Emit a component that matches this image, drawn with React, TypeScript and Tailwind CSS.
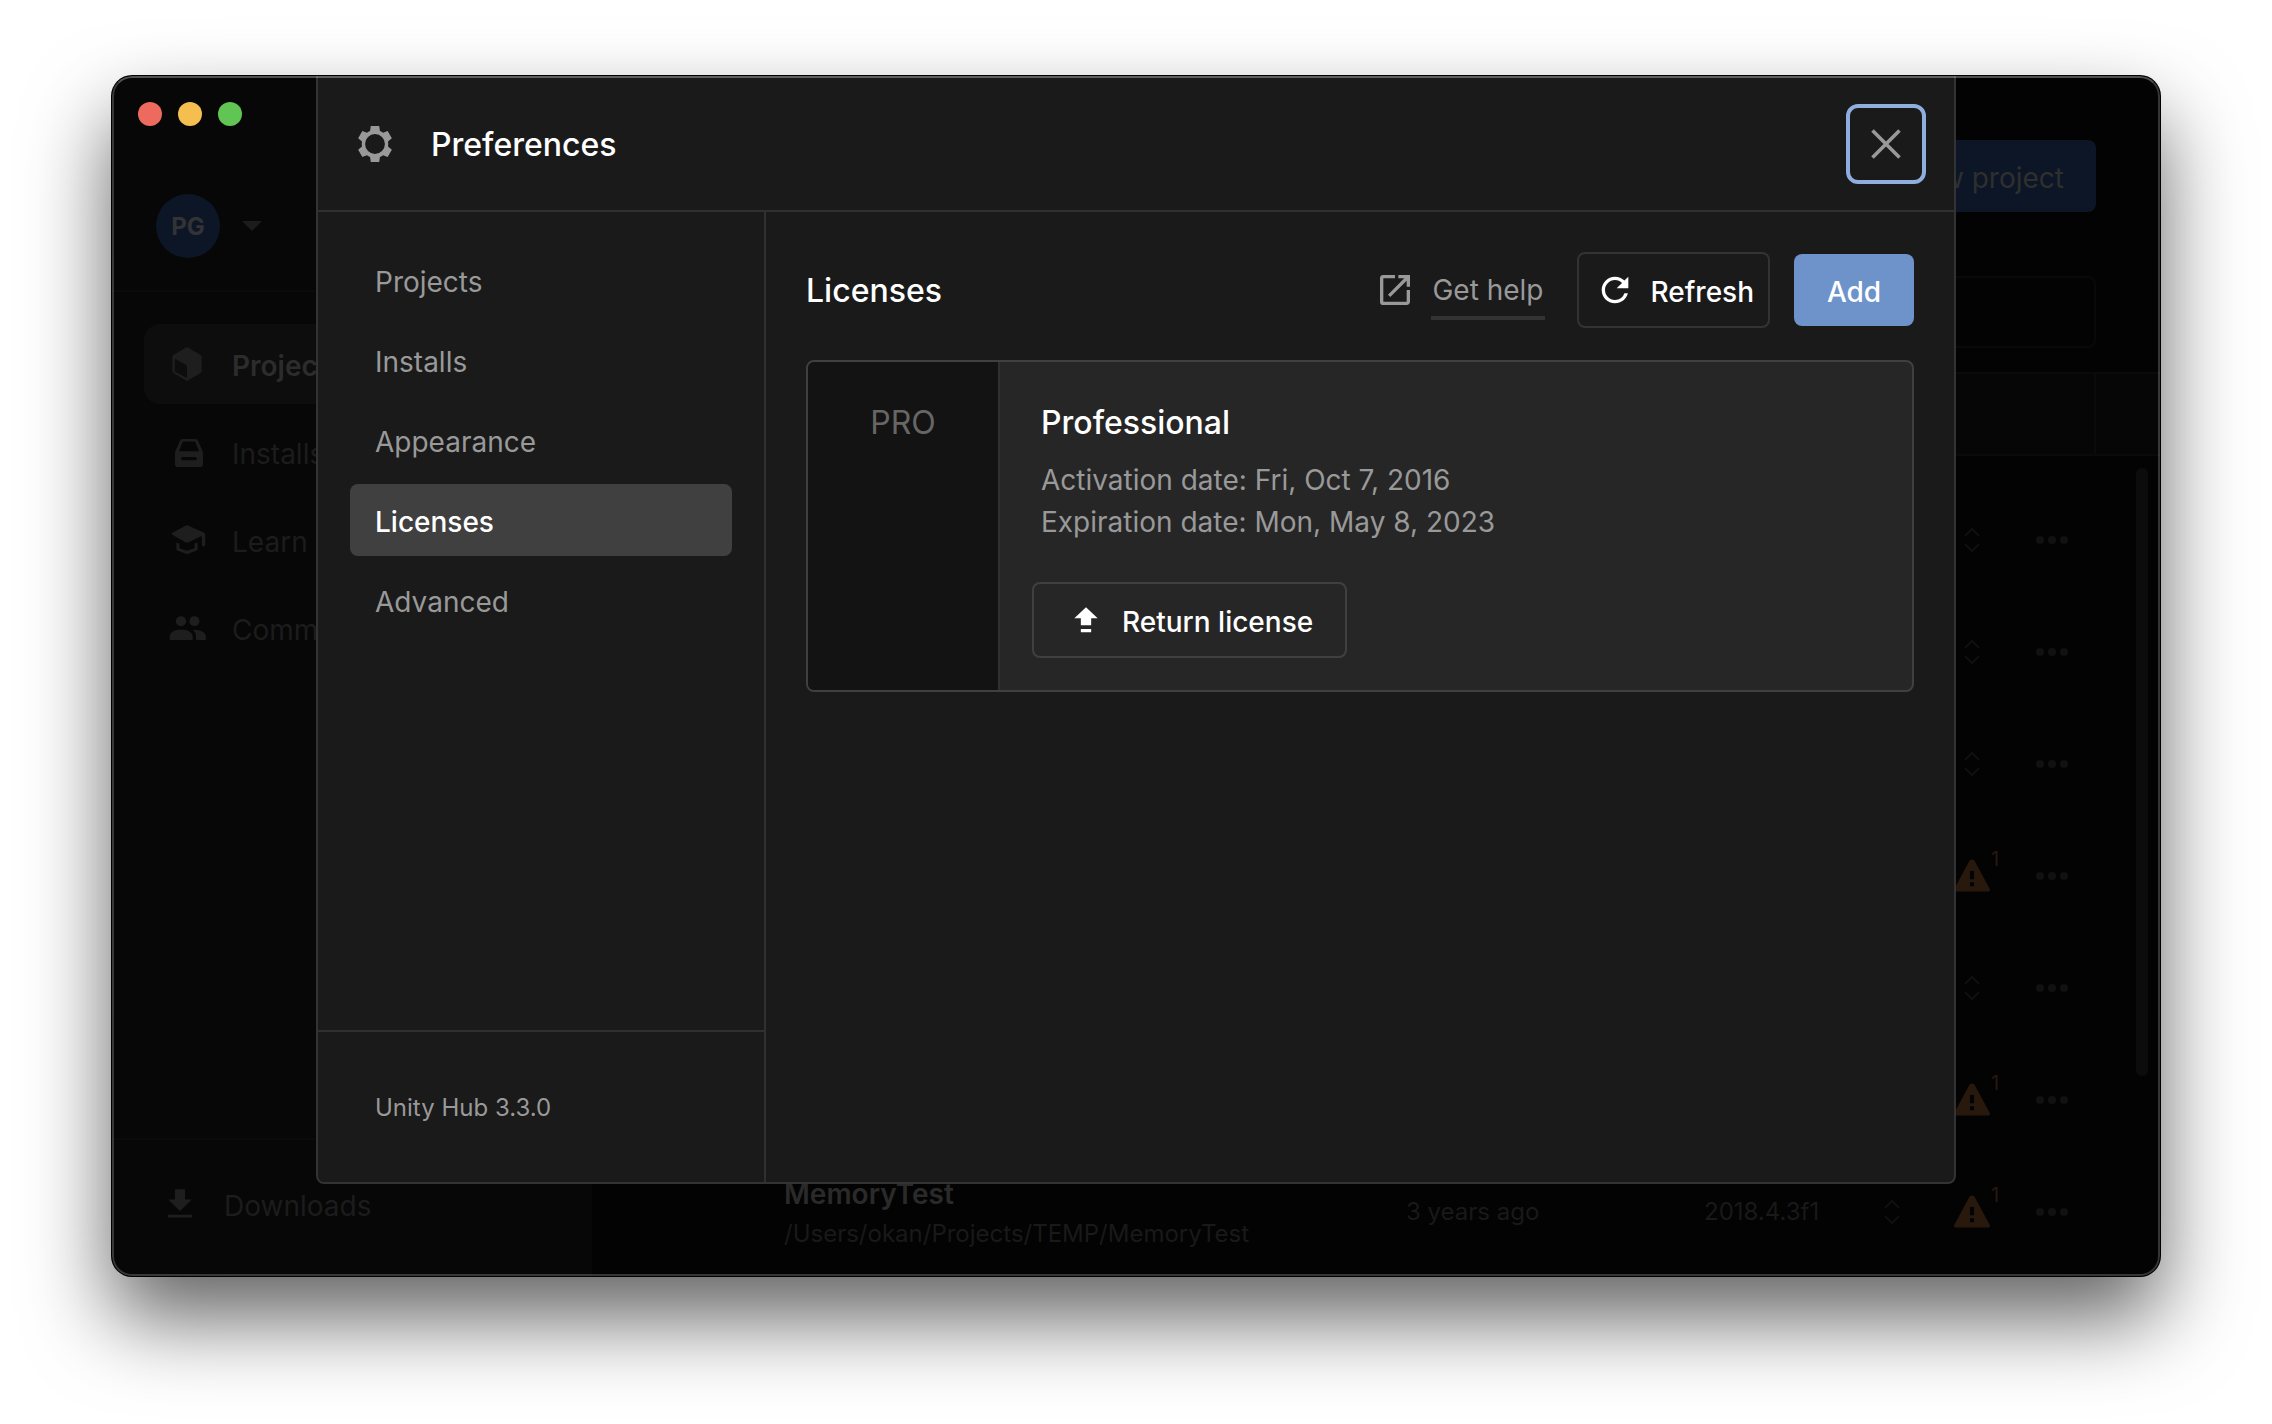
import type { ReactNode, SVGProps } from 'react';

type IconProps = SVGProps<SVGSVGElement>;

function Icon({ children, ...props }: IconProps & { children: ReactNode }) {
  return (
    <svg viewBox="0 0 24 24" fill="currentColor" aria-hidden="true" {...props}>
      {children}
    </svg>
  );
}

const GearIcon = (p: IconProps) => (
  <Icon {...p}>
    <path
      fillRule="evenodd"
      d="M9.700 2.200h4.600l.4 2.700c.6.2 1.200.6 1.700 1l2.500-1 2.300 4-2.100 1.700a7 7 0 0 1 0 2.800l2.100 1.700-2.300 4-2.500-1c-.5.4-1.100.8-1.700 1l-.4 2.700H9.700l-.4-2.700c-.6-.2-1.200-.6-1.700-1l-2.500 1-2.300-4 2.100-1.700a7 7 0 0 1 0-2.800L2.800 8.900l2.300-4 2.500 1c.5-.4 1.100-.8 1.700-1zM12 6.600a5.400 5.400 0 1 0 0 10.800a5.400 5.400 0 0 0 0-10.800z"
    />
  </Icon>
);
const CloseIcon = (p: IconProps) => (
  <Icon {...p}>
    <path d="M3 3l18 18M21 3L3 21" stroke="currentColor" strokeWidth="2.400" fill="none" />
  </Icon>
);
const OpenIcon = (p: IconProps) => (
  <Icon {...p}>
    <path d="M19 19H5V5h7V3H5a2 2 0 0 0-2 2v14a2 2 0 0 0 2 2h14c1.100 0 2-.9 2-2v-7h-2v7zM14 3v2h3.590l-9.830 9.830 1.410 1.410L19 6.410V10h2V3h-7z" />
  </Icon>
);
const RefreshIcon = (p: IconProps) => (
  <Icon {...p}>
    <path d="M17.650 6.350A7.958 7.958 0 0 0 12 4c-4.420 0-7.990 3.580-7.990 8s3.570 8 7.990 8c3.730 0 6.840-2.550 7.730-6h-2.080A5.990 5.990 0 0 1 12 18c-3.310 0-6-2.690-6-6s2.690-6 6-6c1.660 0 3.140.690 4.220 1.780L13 11h7V4l-2.350 2.350z" />
  </Icon>
);
const ReturnIcon = (p: IconProps) => (
  <Icon {...p}>
    <path d="M12 4.400L19 11h-3.900v4.200H8.900V11H5zM8.900 17.400h6.200v2H8.900z" />
  </Icon>
);
const CubeIcon = (p: IconProps) => (
  <Icon {...p}>
    <path
      fillRule="evenodd"
      d="M11.400 1.600q.6-.3 1.200 0l8 4.700q.6.4.6 1.100v9.200q0 .7-.6 1.100l-8 4.700q-.6.300-1.200 0l-8-4.700q-.6-.4-.6-1.100V7.400q0-.7.6-1.100zM4.700 8.800q-.4 0-.4.500v6.900q0 .5.400.8l6.700 3.600q.6.2.6-.5v-6.400q0-.6-.5-1z"
    />
  </Icon>
);
const DriveIcon = (p: IconProps) => (
  <Icon {...p}>
    <path
      fillRule="evenodd"
      d="M9.300 3.800h7.900c.8 0 1.500.5 1.800 1.200l2.900 6.600.2.900v7a2 2 0 0 1-2 2H6.400a2 2 0 0 1-2-2v-7l.2-.9L7.500 5c.3-.7 1-1.200 1.800-1.200zM9.400 5.400L6.900 11.500h12.700l-2.500-6.100zM9.300 15.200a1 1 0 0 0 0 2h7.900a1 1 0 0 0 0-2z"
    />
  </Icon>
);
const LearnIcon = (p: IconProps) => (
  <Icon {...p}>
    <path d="M11.400 2.800q.6-.3 1.200 0l10.300 4.600q.6.3.6.9v6.700a1 1 0 0 1-2.100 0V9.500l-8.700 4q-.7.300-1.400 0L2.500 8.600q-.8-.5 0-1zM5.300 13.800q1-.3 1.900.6v2.800L12 18.800l4.800-1.600v-2.800q.9-.9 1.900-.6v4q0 .6-.6.9L12 21l-6.100-2.300q-.6-.3-.6-.9z" />
  </Icon>
);
const PeopleIcon = (p: IconProps) => (
  <Icon {...p}>
    <circle cx="8.200" cy="7.700" r="3.200" />
    <circle cx="16.700" cy="7.700" r="3.200" />
    <path d="M1.100 19.600v-2.200c0-2.600 3.200-4.400 7.200-4.400s7.300 1.800 7.300 4.400v2.200zM15.700 13.100c4.800-.3 8.200 1.700 8.200 4.300v2.200h-6.200v-2.200c0-1.700-.6-3.200-2-4.300z" />
  </Icon>
);
const DownloadIcon = (p: IconProps) => (
  <Icon {...p}>
    <path d="M8.200 1h7.600v7.600h5L12 17.200 3.200 8.600h5zM3 20h18v2.200H3z" />
  </Icon>
);
const UpDownIcon = (p: IconProps) => (
  <svg viewBox="0 0 16 26" fill="none" stroke="currentColor" strokeWidth="2" aria-hidden="true" {...p}>
    <path d="M1 9l7-7 7 7M1 17l7 7 7-7" />
  </svg>
);
const WarningIcon = (p: IconProps) => (
  <Icon {...p}>
    <path
      fillRule="evenodd"
      d="M10.300 2.600a2 2 0 0 1 3.400 0l9.500 17.600c.5.900-.1 1.600-1 1.600H1.800c-.9 0-1.500-.7-1-1.600zM10.700 8.800v5.200h2.600V8.800zM10.700 16v2.500h2.600V16z"
    />
  </Icon>
);
const DotsIcon = (p: IconProps) => (
  <svg viewBox="0 0 32 8" fill="currentColor" aria-hidden="true" {...p}>
    <circle cx="4" cy="4" r="4" />
    <circle cx="16" cy="4" r="4" />
    <circle cx="28" cy="4" r="4" />
  </svg>
);

const appNav = [
  { label: 'Projects', icon: CubeIcon, active: true },
  { label: 'Installs', icon: DriveIcon, active: false },
  { label: 'Learn', icon: LearnIcon, active: false },
  { label: 'Community', icon: PeopleIcon, active: false },
];

function AppSidebar() {
  return (
    <aside className="flex w-[480px] shrink-0 flex-col bg-[#070707] text-[#1c1c1c]">
      <div className="flex h-[76px] items-center gap-4 pl-[26px]">
        <span className="size-6 rounded-full bg-[#ed6a5e]" />
        <span className="size-6 rounded-full bg-[#f5bf4f]" />
        <span className="size-6 rounded-full bg-[#61c554]" />
      </div>
      <button className="flex h-[140px] items-center gap-[22px] border-b-2 border-[#0a0a0a] pt-[10px] pl-11">
        <span className="flex size-16 items-center justify-center rounded-full bg-[#0d1626] pt-[2px] text-[24px] font-bold text-[#333]">
          PG
        </span>
        <svg viewBox="0 0 20 10" className="w-5" fill="currentColor" aria-hidden="true">
          <path d="M0 0h20L10 10z" />
        </svg>
      </button>
      <nav className="flex grow flex-col gap-2 px-8 pt-8">
        {appNav.map(({ label, icon: NavIcon, active }) => (
          <a
            key={label}
            href="#"
            className={
              active
                ? 'flex h-20 items-center gap-[26px] rounded-2xl bg-[#0d0d0d] pl-6 text-[28px] font-semibold text-[#2c2c2c]'
                : 'flex h-20 items-center gap-[26px] rounded-2xl pl-6 text-[28px]'
            }
          >
            <NavIcon className="size-[38px] text-[#1e1e1e]" />
            <span className="pt-[3px]">{label}</span>
          </a>
        ))}
      </nav>
      <button className="flex h-[138px] items-center gap-7 border-t-2 border-[#0a0a0a] pb-2 pl-[52px] text-[28px]">
        <DownloadIcon className="size-8 text-[#1e1e1e]" />
        <span className="pt-[3px]">Downloads</span>
      </button>
    </aside>
  );
}

type Project = { id: number; warn: boolean; name?: string; path?: string; age?: string; version?: string };

const projects: Project[] = [
  { id: 1, warn: false },
  { id: 2, warn: false },
  { id: 3, warn: false },
  { id: 4, warn: true },
  { id: 5, warn: false },
  { id: 6, warn: true },
  {
    id: 7,
    warn: true,
    name: 'MemoryTest',
    path: '/Users/okan/Projects/TEMP/MemoryTest',
    age: '3 years ago',
    version: '2018.4.3f1',
  },
];

function ProjectRow({ name, path, age, version, warn }: Project) {
  return (
    <li className="flex h-28 items-center pl-48 text-[24px] text-[#191919]">
      <div className="min-w-0 grow pt-1">
        <div className="text-[28px] leading-8 font-semibold text-[#2a2a2a]">{name}</div>
        <div className="mt-2 leading-8">{path}</div>
      </div>
      <span className="w-[298px] shrink-0">{age}</span>
      <span className="w-[148px] shrink-0">{version}</span>
      <span className="flex w-20 shrink-0 justify-center text-[#101010]">
        {warn && <UpDownIcon className="h-[26px] w-4" />}
      </span>
      <span className="flex w-20 shrink-0 justify-center text-[#101010]">
        {warn ? (
          <span className="relative text-[#29190d]">
            <WarningIcon className="size-[38px]" />
            <sup className="absolute -top-2 left-full text-[20px] leading-5">1</sup>
          </span>
        ) : (
          <UpDownIcon className="h-[26px] w-4" />
        )}
      </span>
      <button aria-label="Project menu" className="mr-[92px] ml-6 shrink-0 text-[#111]">
        <DotsIcon className="w-8" />
      </button>
    </li>
  );
}

function ProjectsPage() {
  return (
    <main className="flex min-w-0 grow flex-col bg-[#030303]">
      <div className="flex justify-end pt-16 pr-16">
        <button className="h-[72px] rounded-lg bg-[#0d1626] px-8 pt-[3px] text-[28px] text-[#2f2f2f]">
          New project
        </button>
      </div>
      <div className="mt-16 flex justify-end pr-16">
        <input aria-label="Search" className="h-[72px] w-[480px] rounded-lg border-2 border-[#090909] bg-transparent" />
      </div>
      <div className="mt-6 flex h-[84px] shrink-0 border-y-2 border-[#0a0a0a] bg-[#060606]">
        <div className="grow border-r-2 border-[#0a0a0a]" />
        <div className="w-16" />
      </div>
      <div className="relative">
        <ul className="pt-7">
          {projects.map((p) => (
            <ProjectRow key={p.id} {...p} />
          ))}
        </ul>
        <div className="absolute top-3 right-3 h-[608px] w-3 rounded-full bg-[#0c0c0c]" />
      </div>
    </main>
  );
}

const sections = ['Projects', 'Installs', 'Appearance', 'Licenses', 'Advanced'];

function Preferences() {
  return (
    <section
      role="dialog"
      aria-label="Preferences"
      className="absolute inset-x-[204px] top-0 bottom-[92px] flex flex-col rounded-b-lg border-x-2 border-b-2 border-[#333] bg-[#1a1a1a] text-[28px] text-[#999]"
    >
      <header className="flex h-[136px] shrink-0 items-center border-b-2 border-[#303030] pt-[2px] pr-7 pl-[35px]">
        <GearIcon className="size-11" />
        <h1 className="ml-[34px] grow pt-[2px] text-[32px] font-medium text-white">Preferences</h1>
        <button
          aria-label="Close"
          className="flex size-20 items-center justify-center rounded-xl border-4 border-[#8fadde]"
        >
          <CloseIcon className="size-9" />
        </button>
      </header>
      <div className="flex min-h-0 grow">
        <div className="flex w-[448px] shrink-0 flex-col border-r-2 border-[#303030]">
          <nav className="flex grow flex-col gap-2 px-8 pt-8">
            {sections.map((s) => (
              <a
                key={s}
                href="#"
                className={
                  s === 'Licenses'
                    ? 'flex h-[72px] items-center rounded-lg bg-[#404040] px-[25px] pt-[3px] font-medium text-white'
                    : 'flex h-[72px] items-center rounded-lg px-[25px] pt-[3px]'
                }
              >
                {s}
              </a>
            ))}
          </nav>
          <footer className="flex h-[152px] items-center border-t-2 border-[#303030] pt-[2px] pl-[57px] text-[24px]">
            Unity Hub 3.3.0
          </footer>
        </div>
        <div className="grow px-10 pt-10">
          <div className="flex h-[76px] items-center">
            <h2 className="grow pt-[2px] text-[32px] font-medium text-white">Licenses</h2>
            <OpenIcon className="size-10" />
            <a href="#" className="mt-[8px] ml-4 border-b-4 border-[#333] px-[1px] pb-1 leading-[44px]">
              Get help
            </a>
            <button className="ml-8 flex h-[76px] items-center gap-4 rounded-lg border-2 border-[#333] pr-[14px] pl-4 font-medium text-white">
              <RefreshIcon className="size-10" />
              <span className="pt-[3px]">Refresh</span>
            </button>
            <button className="ml-6 h-[72px] w-[120px] rounded-lg bg-[#6e93ca] pt-[3px] font-medium text-white">
              Add
            </button>
          </div>
          <article className="mt-8 flex h-[332px] overflow-hidden rounded-lg border-2 border-[#404040] bg-[#262626]">
            <div className="w-[192px] shrink-0 border-r-2 border-[#303030] bg-[#131313] pt-[41px] text-center text-[32px] leading-10 text-[#666]">
              PRO
            </div>
            <div className="pt-[41px] pl-8">
              <h3 className="pl-[9px] text-[32px] leading-10 font-medium text-white">Professional</h3>
              <p className="mt-4 pl-[9px] leading-[42px]">
                Activation date: Fri, Oct 7, 2016
                <br />
                Expiration date: Mon, May 8, 2023
              </p>
              <button className="mt-[39px] flex h-[76px] items-center gap-4 rounded-lg border-2 border-[#404040] px-8 font-medium text-white">
                <ReturnIcon className="size-10" />
                <span className="pt-[3px]">Return license</span>
              </button>
            </div>
          </article>
        </div>
      </div>
    </section>
  );
}

export default function App() {
  return (
    <div className="min-h-screen bg-white px-28 pt-[76px] pb-[148px] font-['Inter',sans-serif]">
      <div className="relative flex h-[1200px] overflow-hidden rounded-[20px] bg-black shadow-[0_0_0_1px_#000,0_42px_84px_rgba(0,0,0,0.62)]">
        <AppSidebar />
        <ProjectsPage />
        <Preferences />
        <div className="pointer-events-none absolute inset-0 rounded-[20px] border-2 border-white/20 border-t-white/30" />
      </div>
    </div>
  );
}
